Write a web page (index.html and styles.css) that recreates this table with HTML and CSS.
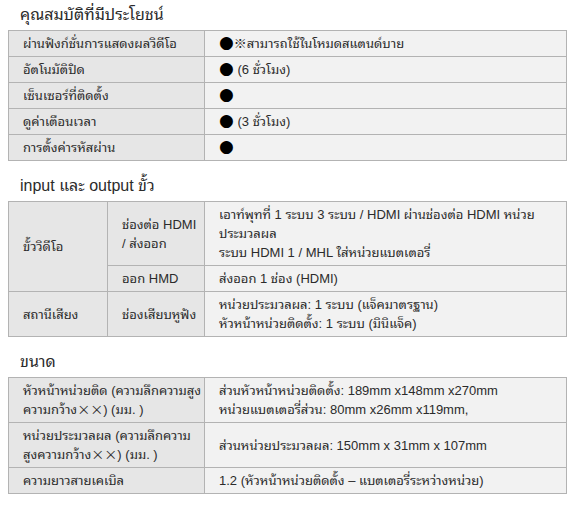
FILE: index.html
```html
<!DOCTYPE html>
<html lang="th">
<head>
<meta charset="utf-8">
<link rel="stylesheet" href="styles.css">
</head>
<body>
<div class="page">
  <h2 class="title first">คุณสมบัติที่มีประโยชน์</h2>
  <table class="spec">
    <colgroup><col class="c-head"><col class="c-val"></colgroup>
    <tr><th>ผ่านฟังก์ชั่นการแสดงผลวิดีโอ</th><td><span class="dot">●</span><span class="sym">※</span>สามารถใช้ในโหมดสแตนด์บาย</td></tr>
    <tr><th>อัตโนมัติปิด</th><td><span class="dot">●</span> (6 ชั่วโมง)</td></tr>
    <tr><th>เซ็นเซอร์ที่ติดตั้ง</th><td><span class="dot">●</span></td></tr>
    <tr><th>ดูค่าเตือนเวลา</th><td><span class="dot">●</span> (3 ชั่วโมง)</td></tr>
    <tr><th>การตั้งค่ารหัสผ่าน</th><td><span class="dot">●</span></td></tr>
  </table>

  <h2 class="title">input และ output ขั้ว</h2>
  <table class="spec">
    <colgroup><col class="c-a"><col class="c-b"><col class="c-val"></colgroup>
    <tr><th rowspan="2">ขั้ววิดีโอ</th><th>ช่องต่อ HDMI<br>/ ส่งออก</th><td>เอาท์พุทที่ 1 ระบบ 3 ระบบ / HDMI ผ่านช่องต่อ HDMI หน่วย<br>ประมวลผล<br>ระบบ HDMI 1 / MHL ใส่หน่วยแบตเตอรี่</td></tr>
    <tr><th>ออก HMD</th><td>ส่งออก 1 ช่อง (HDMI)</td></tr>
    <tr><th>สถานีเสียง</th><th>ช่องเสียบหูฟัง</th><td>หน่วยประมวลผล: 1 ระบบ (แจ็คมาตรฐาน)<br>หัวหน้าหน่วยติดตั้ง: 1 ระบบ (มินิแจ็ค)</td></tr>
  </table>

  <h2 class="title">ขนาด</h2>
  <table class="spec">
    <colgroup><col class="c-head"><col class="c-val"></colgroup>
    <tr><th>หัวหน้าหน่วยติด (ความลึกความสูง<br>ความกว้าง<span class="sym">××</span>) (มม. )</th><td>ส่วนหัวหน้าหน่วยติดตั้ง: 189mm x148mm x270mm<br>หน่วยแบตเตอรี่ส่วน: 80mm x26mm x119mm,</td></tr>
    <tr><th>หน่วยประมวลผล (ความลึกความ<br>สูงความกว้าง<span class="sym">××</span>) (มม. )</th><td>ส่วนหน่วยประมวลผล: 150mm x 31mm x 107mm</td></tr>
    <tr><th>ความยาวสายเคเบิล</th><td>1.2 (หัวหน้าหน่วยติดตั้ง – แบตเตอรี่ระหว่างหน่วย)</td></tr>
  </table>
</div>
</body>
</html>
```

FILE: styles.css
```css
html, body {
  margin: 0;
  padding: 0;
  background: #ffffff;
}
.page {
  padding: 0 11px 0 8px;
  font-family: "Liberation Sans", "Noto Sans Thai Looped", sans-serif;
  color: #2b2b2b;
  font-size: 13px;
}
.title {
  font-size: 16px;
  font-weight: normal;
  line-height: 22px;
  margin: 14px 0 4px 12px;
  color: #2b2b2b;
}
.title.first {
  margin-top: 4px;
}
.spec {
  border-collapse: collapse;
  width: 559px;
  table-layout: fixed;
}
.c-head { width: 196px; }
.c-a { width: 99px; }
.c-b { width: 97px; }
.spec th, .spec td {
  border: 1px solid #b3b3b3;
  padding: 3px 4px 3px 14px;
  line-height: 19px;
  text-align: left;
  font-weight: normal;
  vertical-align: middle;
  white-space: nowrap;
}
.spec th {
  background: #e6e6e6;
}
.spec td {
  background: #f2f2f2;
}
.dot {
  font-family: "DejaVu Sans", sans-serif;
  font-size: 17px;
  color: #000000;
  line-height: 1;
}
.sym {
  font-family: "Noto Sans CJK JP", sans-serif;
  font-size: 13px;
  line-height: 1;
}
```
